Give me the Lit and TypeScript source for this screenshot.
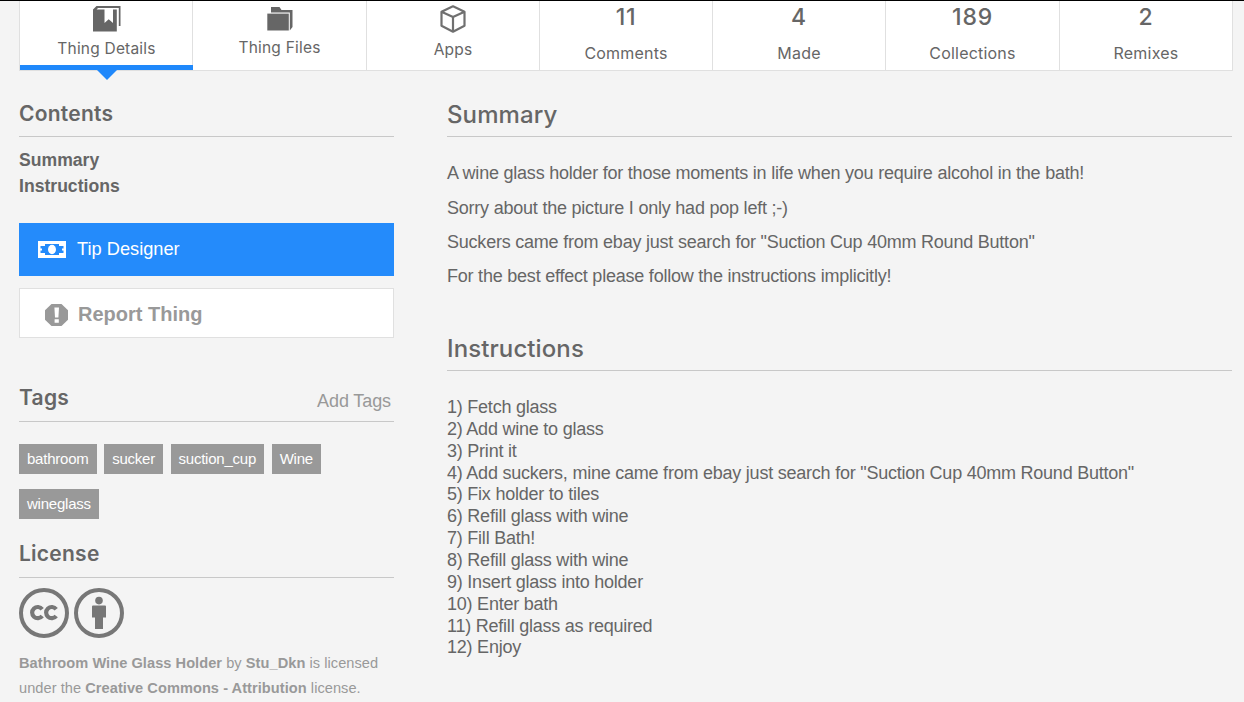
import { LitElement, html, css, svg } from "lit";
import { customElement } from "lit/decorators.js";

const icons = {
  details: svg`<svg class="icon" width="28" height="26" viewBox="0 0 28 26"><path fill="#666" d="M0 3.5 L3.5 0 H27.5 V20 H25.8 V2 H5 L3.6 3.4 H11.5 V17 L15.7 13.2 L20 17 V3.4 H23.8 V25.5 H0 Z"/></svg>`,
  files: svg`<svg class="icon" width="26" height="24" viewBox="0 0 26 24"><path fill="#666" d="M4 5 V0 H12.5 L14.5 3 H25.5 V20 L22.8 23.5 V5.5 H4 Z"/><path fill="#666" d="M0.3 6.6 H21.8 V23.5 H0.3 Z"/></svg>`,
  apps: svg`<svg class="icon" width="26" height="28" viewBox="0 0 26 28"><path fill="none" stroke="#707070" stroke-width="2.2" stroke-linejoin="round" d="M13 1.3 L24.5 6.7 V20.8 L13 26.7 L1.5 20.8 V6.7 Z M1.5 6.7 L13 12 L24.5 6.7 M13 12 V26.7"/></svg>`,
};

const iconTabs = [
  { name: "details", label: "Thing Details", icon: icons.details },
  { name: "files", label: "Thing Files", icon: icons.files },
  { name: "apps", label: "Apps", icon: icons.apps },
];
const countTabs = [
  { name: "comments", label: "Comments", count: 11 },
  { name: "made", label: "Made", count: 4 },
  { name: "collections", label: "Collections", count: 189 },
  { name: "remixes", label: "Remixes", count: 2 },
];
const tags = ["bathroom", "sucker", "suction_cup", "Wine", "wineglass"];
const summary = [
  "A wine glass holder for those moments in life when you require alcohol in the bath!",
  "Sorry about the picture I only had pop left ;-)",
  'Suckers came from ebay just search for "Suction Cup 40mm Round Button"',
  "For the best effect please follow the instructions implicitly!",
];
const steps = [
  "Fetch glass",
  "Add wine to glass",
  "Print it",
  'Add suckers, mine came from ebay just search for "Suction Cup 40mm Round Button"',
  "Fix holder to tiles",
  "Refill glass with wine",
  "Fill Bath!",
  "Refill glass with wine",
  "Insert glass into holder",
  "Enter bath",
  "Refill glass as required",
  "Enjoy",
];

@customElement("thing-tabs")
class ThingTabs extends LitElement {
  static styles = css`
    :host { display: block; padding: 0 11px 0 19px; }
    .tabs { display: grid; grid-template-columns: 172px 174px 173px 173px 173px 174px 1fr; height: 70px; box-sizing: border-box; background: #fff; border: 1px solid #e0e0e0; border-top: 0; font-family: Inter, "Open Sans", sans-serif; color: #666; }
    .tab { position: relative; box-sizing: border-box; border-left: 1px solid #e0e0e0; display: flex; flex-direction: column; align-items: center; white-space: nowrap; }
    .tab:first-child { border-left: 0; padding-left: 1px; z-index: 1; }
    .icon { display: block; flex: none; }
    .label { font-size: 15.5px; line-height: 20px; letter-spacing: 0.2px; }
    .details { padding-top: 5px; }
    .details .label { margin-top: 7px; }
    .details::before { content: ""; position: absolute; left: 0; right: -1px; bottom: 0; height: 5px; background: #1f88fb; }
    .details::after { content: ""; position: absolute; left: 50%; margin-left: -9px; bottom: -10px; border: 10px solid transparent; border-top-color: #1f88fb; border-bottom: 0; }
    .files { padding-top: 6px; }
    .files .label { margin-top: 7px; }
    .apps { padding-top: 4px; }
    .apps .label { margin-top: 7px; }
    .count { font-size: 23px; line-height: 30px; font-weight: 500; letter-spacing: 0.8px; margin-top: 1px; }
    .count + .label { font-size: 16px; margin-top: 11px; }
  `;
  render() {
    return html`<nav class="tabs">
      ${iconTabs.map((t) => html`<div class="tab ${t.name}">${t.icon}<span class="label">${t.label}</span></div>`)}
      ${countTabs.map((t) => html`<div class="tab ${t.name}"><span class="count">${t.count}</span><span class="label">${t.label}</span></div>`)}
    </nav>`;
  }
}

@customElement("thing-sidebar")
class ThingSidebar extends LitElement {
  static styles = css`
    :host { display: block; color: #666; }
    .heading { display: flex; justify-content: space-between; box-sizing: border-box; border-bottom: 1px solid #c8c8c8; }
    .title { margin: 0; font: 600 21px/24px Inter, "Open Sans", sans-serif; letter-spacing: 0.25px; }
    .contents-head { height: 66px; padding-top: 31px; }
    .tags-head { height: 84px; padding-top: 48px; }
    .license-head { height: 59px; padding-top: 23px; }
    .add { font-size: 18px; line-height: 24px; letter-spacing: -0.1px; color: #999; margin: 3px 3px 0 0; }
    .links { padding-top: 10px; font-size: 17.6px; line-height: 26px; font-weight: bold; }
    .tip { margin-top: 24px; height: 53px; display: flex; align-items: center; gap: 11px; padding-left: 19px; background: #248bfb; color: #fff; font-size: 18.24px; }
    .tip-text { margin-top: -2px; }
    .report { margin-top: 12px; height: 50px; box-sizing: border-box; display: flex; align-items: center; gap: 10px; padding-left: 25px; background: #fff; border: 1px solid #e0e0e0; color: #999; font-size: 20px; font-weight: bold; }
    .report-icon { margin-top: 3px; }
    .report-text { margin-top: 2px; }
    .tags { margin-top: 22px; display: flex; flex-wrap: wrap; gap: 15px 7.6px; }
    .tag { padding: 0 8px; background: #999; color: #fff; font-size: 15px; letter-spacing: -0.23px; line-height: 30px; }
    .badges { display: flex; gap: 5px; padding-top: 10px; }
    .license { margin: 13px 0 0; font-size: 14.6px; letter-spacing: 0.05px; line-height: 25px; color: #999; white-space: nowrap; }
  `;
  render() {
    return html`
      <div class="heading contents-head"><h2 class="title">Contents</h2></div>
      <div class="links"><div>Summary</div><div>Instructions</div></div>
      <div class="tip">
        <svg width="28" height="17" viewBox="0 0 28 17"><rect width="28" height="17" fill="#fff"/><path fill="#248bfb" d="M7 3 H21 V5 H25.5 V7.5 H24 V9.5 H25.5 V12 H21 V14 H7 V12 H2.5 V9.5 H4 V7.5 H2.5 V5 H7 Z"/><ellipse cx="14" cy="8.5" rx="4" ry="4.7" fill="#fff"/></svg>
        <span class="tip-text">Tip Designer</span>
      </div>
      <div class="report">
        <svg class="report-icon" width="23" height="22" viewBox="0 0 23 22"><path fill="#999" d="M6.5 0 H16.5 L23 6.2 V15.8 L16.5 22 H6.5 L0 15.8 V6.2 Z"/><path fill="#fff" d="M9.4 3.4 H14 L13.4 13.4 H10 Z M9.6 15.2 H13.8 V18.8 H9.6 Z"/></svg>
        <span class="report-text">Report Thing</span>
      </div>
      <div class="heading tags-head"><h2 class="title">Tags</h2><span class="add">Add Tags</span></div>
      <div class="tags">${tags.map((t) => html`<span class="tag">${t}</span>`)}</div>
      <div class="heading license-head"><h2 class="title">License</h2></div>
      <div class="badges">
        <svg width="50" height="50" viewBox="0 0 50 50"><circle cx="25" cy="25" r="23" fill="none" stroke="#777" stroke-width="4"/><g fill="none" stroke="#777" stroke-width="4.2"><path d="M23.2 21.2 A5.6 5.6 0 1 0 23.2 28"/><path d="M37.2 21.2 A5.6 5.6 0 1 0 37.2 28"/></g></svg>
        <svg width="50" height="50" viewBox="0 0 50 50"><circle cx="25" cy="25" r="23" fill="none" stroke="#777" stroke-width="4"/><circle cx="25" cy="12.6" r="3.8" fill="#777"/><path fill="#777" d="M19 17.5 H31 Q32 17.5 32 18.5 V29.5 H29 V41 H21 V29.5 H18 V18.5 Q18 17.5 19 17.5 Z"/></svg>
      </div>
      <p class="license"><b>Bathroom Wine Glass Holder</b> by <b>Stu_Dkn</b> is licensed<br />under the <b>Creative Commons - Attribution</b> license.</p>
    `;
  }
}

@customElement("app-root")
class AppRoot extends LitElement {
  static styles = css`
    :host { display: block; box-sizing: border-box; height: 702px; overflow: hidden; border-top: 1px solid #000; background: #f4f4f4; color: #666; font-family: "Liberation Sans", Arial, sans-serif; }
    .columns { display: grid; grid-template-columns: 375px 785px; column-gap: 53px; padding-left: 19px; }
    .title { margin: 0; box-sizing: border-box; height: 66px; padding-top: 30px; border-bottom: 1px solid #c8c8c8; font: 500 24px/28px Inter, "Open Sans", sans-serif; letter-spacing: 0.1px; }
    .second { height: 84px; padding-top: 48px; }
    .summary { padding-top: 25.4px; display: flex; flex-direction: column; gap: 12.2px; font-size: 18px; letter-spacing: -0.22px; line-height: 22px; white-space: nowrap; }
    .steps { padding-top: 26px; font-size: 18px; letter-spacing: -0.23px; line-height: 21.86px; white-space: nowrap; }
  `;
  render() {
    return html`
      <thing-tabs></thing-tabs>
      <div class="columns">
        <thing-sidebar></thing-sidebar>
        <main>
          <h1 class="title">Summary</h1>
          <div class="summary">${summary.map((s) => html`<div>${s}</div>`)}</div>
          <h1 class="title second">Instructions</h1>
          <div class="steps">${steps.map((s, i) => html`<div>${i + 1}) ${s}</div>`)}</div>
        </main>
      </div>
    `;
  }
}
